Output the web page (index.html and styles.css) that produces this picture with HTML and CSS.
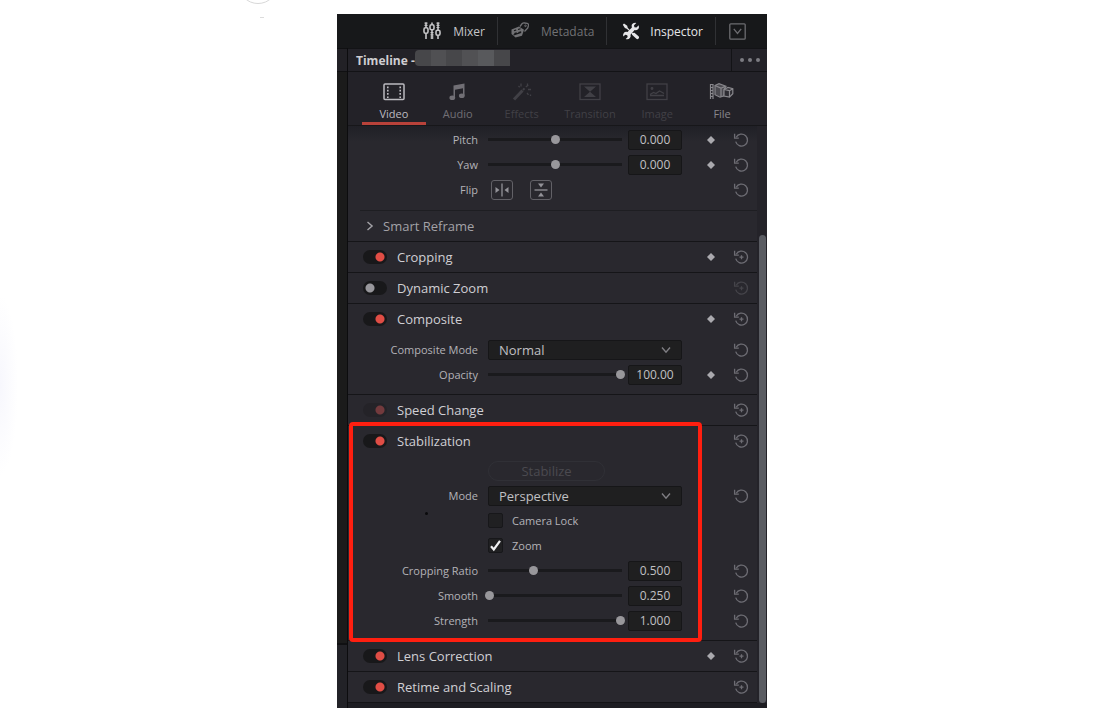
FILE: index.html
```html
<!DOCTYPE html>
<html lang="en">
<head>
<meta charset="utf-8">
<meta name="viewport" content="width=device-width, initial-scale=1">
<title>Inspector</title>
<link rel="stylesheet" href="styles.css">
</head>
<body>
<svg class="sprite" aria-hidden="true">
  <symbol id="reset" viewBox="0 0 16 16">
    <path d="M3.200 5.300A6 6 0 1 1 2.700 9.700" fill="none" stroke="currentColor" stroke-width="1.300"/>
    <path d="M1.600 1.800v4.400h4.200" fill="none" stroke="currentColor" stroke-width="1.300"/>
  </symbol>
  <symbol id="reset-all" viewBox="0 0 16 16">
    <path d="M3.200 5.300A6 6 0 1 1 2.700 9.700" fill="none" stroke="currentColor" stroke-width="1.300"/>
    <path d="M1.600 1.800v4.400h4.200M8.500 6.200v4M6.500 8.200h4" fill="none" stroke="currentColor" stroke-width="1.300"/>
  </symbol>
  <symbol id="key" viewBox="0 0 14 14"><path d="M7 2.900 11 7 7 11.100 3 7z" fill="currentColor"/></symbol>
  <symbol id="chevron" viewBox="0 0 12 12"><path d="m2 3.500 4 4.600 4-4.600" fill="none" stroke="currentColor" stroke-width="1.400"/></symbol>
</svg>
<span class="page-arc" aria-hidden="true"></span>

<main class="panel">
  <nav class="topbar" aria-label="Panels">
    <button class="top-item" type="button">
      <svg width="18" height="18" viewBox="0 0 18 18" fill="none" stroke="currentColor" stroke-width="1.600"><path d="M3 .5v5M3 11.500v5.500M9 .5v2M9 8v9M15 .5v7.500M15 13.500v3.500"/><path d="M3 .5v4M9 10v7M15 .5v6" stroke-width="3" stroke-dasharray="1.200 1"/><rect x="1" y="5.700" width="4" height="5.600" rx="1.500"/><rect x="7" y="2.800" width="4" height="5" rx="1.500"/><rect x="13" y="8.300" width="4" height="5" rx="1.500"/></svg>
      <span>Mixer</span>
    </button>
    <button class="top-item top-item-dim" type="button">
      <svg width="18" height="18" viewBox="0 0 18 18" fill="none" stroke="currentColor"><path d="m9 4.500 2-2.700q1-1 2.500-.8l2.700.4q1.500.4 1.300 2l-.7 2.600-3.300 3.500" stroke-width="1.300"/><path d="M.5 7.500 8 4.500l5 3.200-2 6-6.500 1.800L.5 12z" fill="currentColor" stroke="none"/><path d="m3 8.800 2.200-.8M3.300 11.500l2.400-.8M7 7.500l2.500-.8M7.400 10.700l2.800-.8M2.500 13l7.500-2.600" stroke="#17181a" stroke-width="1.200"/><circle cx="14.500" cy="3.800" r=".8"/></svg>
      <span>Metadata</span>
    </button>
    <button class="top-item top-item-on" type="button">
      <svg width="18" height="18" viewBox="0 0 18 18"><path d="m2 1.500 3.200 2.200.5 2L10.500 11l2-.3 4.300 3.800q.8 1.400-.4 2.300-1.100.8-2.300-.2L10 12.700l-.2-1.700L4.700 6.700l-1.800-.6L.8 2.800z" fill="currentColor"/><path d="M16.800 3.200 14.400 5.600l-2-.3-.4-2L14.300.9q-3.200-.6-4.400 1.700-.6 1.200 0 2.800L5.500 10q-2.300-.6-3.700.9-1.200 1.500-.5 3.700l2-1.900 1.900.5.500 1.800-2 2q2.800.7 4.200-1 1.200-1.600.6-3.300l4.100-4.600q2 .5 3.400-.8 1.400-1.500.8-4.100z" fill="currentColor"/></svg>
      <span>Inspector</span>
    </button>
    <button class="top-item top-item-menu" type="button" aria-label="Panel options">
      <svg width="17" height="17" viewBox="0 0 17 17" fill="none" stroke="currentColor" stroke-width="1.300"><rect x=".8" y=".8" width="15.400" height="15.400" rx="1"/><path d="m4.800 5.800 3.700 4.700 3.700-4.700"/></svg>
    </button>
  </nav>

  <div class="workspace">
    <div class="gutter" aria-hidden="true"><span class="gutter-title"></span><span class="gutter-mid"></span><span class="gutter-end"></span></div>
    <div class="inspector">
      <header class="titlebar">
        <h1 class="title">Timeline -</h1>
        <span class="redacted" aria-hidden="true"><i></i><i></i><i></i><i></i><i></i><i></i></span>
        <button class="more" type="button" aria-label="More"><i></i><i></i><i></i></button>
      </header>

      <nav class="tabs" aria-label="Inspector tabs">
        <button class="tab tab-on" type="button">
          <svg width="24" height="20" viewBox="0 0 24 20"><rect x="2" y="2" width="20" height="15.500" rx="1" fill="none" stroke="currentColor" stroke-width="1.500"/><path d="M5.800 4.500v12M18.200 4.500v12" stroke="currentColor" stroke-width="1.600" stroke-dasharray="1.700 1.600"/></svg>
          <span>Video</span></button>
        <button class="tab" type="button">
          <svg width="24" height="20" viewBox="0 0 24 20" fill="currentColor"><path d="M7.500 3.500 18.500 1.500v12H17V6.200L9 7.700v8H7.500z"/><ellipse cx="6.300" cy="15.800" rx="2.900" ry="2.300"/><ellipse cx="15.800" cy="13.800" rx="2.900" ry="2.300"/></svg>
          <span>Audio</span></button>
        <button class="tab tab-off" type="button">
          <svg width="24" height="20" viewBox="0 0 24 20" fill="none" stroke="currentColor"><path d="m4 17.500 8.500-9" stroke-width="3"/><path d="m13 8 1.500-1.700" stroke-width="2"/><path d="M11 1.500v3M17.500 1.500v2M15.800 5l2.500-2M18 7.500h3M17 11l1.500 1.800M8.500 4l1.200 1.200M20.500 12.500v1.500" stroke-width="1.300"/></svg>
          <span>Effects</span></button>
        <button class="tab tab-off" type="button">
          <svg width="24" height="20" viewBox="0 0 24 20"><rect x="2" y="2" width="20" height="15.500" fill="none" stroke="currentColor" stroke-width="1.300"/><path d="M6 4.500h12L12 9.800zM6 15h12l-6-5.200z" fill="currentColor"/></svg>
          <span>Transition</span></button>
        <button class="tab tab-off" type="button">
          <svg width="24" height="20" viewBox="0 0 24 20" fill="none" stroke="currentColor" stroke-width="1.300"><rect x="2" y="2" width="20" height="15.500"/><path d="m5 12.500 3.500-2 2.500 1 3.500-2.500 2 1 2.500 1.500M5 13.500h14"/><circle cx="7" cy="6.500" r=".8"/></svg>
          <span>Image</span></button>
        <button class="tab tab-file" type="button">
          <svg width="26" height="20" viewBox="0 0 26 20" fill="none" stroke="currentColor" stroke-width="1.200"><path d="M1.500 2v15M4 2v15M1.500 2.500H4M1.500 5.500H4M1.500 8.500H4M1.500 11.500H4M1.500 14.500H4"/><path d="m6 3.500 4-1.800 7 2.500-1.500 2.500-.5 7-4 1.500-5-2.500z" fill="#4b4a50"/><path d="m6 3.500 6 2.700V15M12 6.200l4-1.800"/><path d="m15 7.500 4-2 4.800 1.200v5l-3.300 3.500-5.500-1.200zM20.500 8.700v6M20.500 8.700l3.300-2M15 7.500l5.500 1.200" fill="#2d2c32"/></svg>
          <span>File</span></button>
      </nav>

      <div class="scroller">
        <div class="content">
          <section class="group group-first">
            <div class="row"><label class="label" for="pitch">Pitch</label>
              <div class="control"><input class="slider" id="pitch" type="range" min="0" max="1000" value="500"><input class="value" type="text" value="0.000" aria-label="Pitch value"></div>
              <div class="actions"><button class="act key" type="button" aria-label="Keyframe"><svg width="14" height="14"><use href="#key"/></svg></button><button class="act" type="button" aria-label="Reset"><svg width="16" height="16"><use href="#reset"/></svg></button></div></div>
            <div class="row"><label class="label" for="yaw">Yaw</label>
              <div class="control"><input class="slider" id="yaw" type="range" min="0" max="1000" value="500"><input class="value" type="text" value="0.000" aria-label="Yaw value"></div>
              <div class="actions"><button class="act key" type="button" aria-label="Keyframe"><svg width="14" height="14"><use href="#key"/></svg></button><button class="act" type="button" aria-label="Reset"><svg width="16" height="16"><use href="#reset"/></svg></button></div></div>
            <div class="row"><span class="label">Flip</span>
              <div class="control control-flip">
                <button class="flip" type="button" aria-label="Flip horizontally"><svg width="20" height="18" viewBox="0 0 20 18"><path d="M10 2.500v13" stroke="currentColor" stroke-width="1.300"/><path d="M3.500 6v6l4-3zM16.500 6v6l-4-3z" fill="currentColor"/></svg></button>
                <button class="flip" type="button" aria-label="Flip vertically"><svg width="20" height="18" viewBox="0 0 20 18"><path d="M3.500 9h13" stroke="currentColor" stroke-width="1.300"/><path d="M7 2.500h6l-3 4zM7 15.500h6l-3-4z" fill="currentColor"/></svg></button>
              </div>
              <div class="actions"><button class="act" type="button" aria-label="Reset"><svg width="16" height="16"><use href="#reset"/></svg></button></div></div>
          </section>
          <button class="reframe" type="button"><svg class="reframe-arrow" width="12" height="12"><use href="#chevron"/></svg><span>Smart Reframe</span></button>

          <section class="group">
            <div class="head"><input class="toggle" id="cropping" type="checkbox" checked><label class="head-title" for="cropping">Cropping</label>
              <div class="actions"><button class="act key" type="button" aria-label="Keyframe"><svg width="14" height="14"><use href="#key"/></svg></button><button class="act" type="button" aria-label="Reset"><svg width="16" height="16"><use href="#reset-all"/></svg></button></div></div>
          </section>
          <section class="group">
            <div class="head"><input class="toggle" id="dynamic" type="checkbox"><label class="head-title" for="dynamic">Dynamic Zoom</label>
              <div class="actions"><button class="act act-dim" type="button" aria-label="Reset"><svg width="16" height="16"><use href="#reset-all"/></svg></button></div></div>
          </section>
          <section class="group">
            <div class="head"><input class="toggle" id="composite" type="checkbox" checked><label class="head-title" for="composite">Composite</label>
              <div class="actions"><button class="act key" type="button" aria-label="Keyframe"><svg width="14" height="14"><use href="#key"/></svg></button><button class="act" type="button" aria-label="Reset"><svg width="16" height="16"><use href="#reset-all"/></svg></button></div></div>
            <div class="rows">
              <div class="row"><label class="label" for="cmode">Composite Mode</label>
                <div class="control"><select class="select" id="cmode"><option>Normal</option></select><svg class="select-arrow" width="12" height="12"><use href="#chevron"/></svg></div>
                <div class="actions"><button class="act" type="button" aria-label="Reset"><svg width="16" height="16"><use href="#reset"/></svg></button></div></div>
              <div class="row"><label class="label" for="opacity">Opacity</label>
                <div class="control"><input class="slider" id="opacity" type="range" min="0" max="1000" value="1000"><input class="value" type="text" value="100.00" aria-label="Opacity value"></div>
                <div class="actions"><button class="act key" type="button" aria-label="Keyframe"><svg width="14" height="14"><use href="#key"/></svg></button><button class="act" type="button" aria-label="Reset"><svg width="16" height="16"><use href="#reset"/></svg></button></div></div>
            </div>
          </section>
          <section class="group">
            <div class="head"><input class="toggle toggle-dim" id="speed" type="checkbox" checked><label class="head-title" for="speed">Speed Change</label>
              <div class="actions"><button class="act" type="button" aria-label="Reset"><svg width="16" height="16"><use href="#reset-all"/></svg></button></div></div>
          </section>
          <section class="group group-marked">
            <div class="head"><input class="toggle" id="stab" type="checkbox" checked><label class="head-title" for="stab">Stabilization</label>
              <div class="actions"><button class="act" type="button" aria-label="Reset"><svg width="16" height="16"><use href="#reset-all"/></svg></button></div></div>
            <div class="rows">
              <div class="row"><span class="label"></span><div class="control"><button class="stabilize" type="button" disabled>Stabilize</button></div></div>
              <div class="row"><label class="label" for="smode">Mode</label>
                <div class="control"><select class="select" id="smode"><option>Perspective</option></select><svg class="select-arrow" width="12" height="12"><use href="#chevron"/></svg></div>
                <div class="actions"><button class="act" type="button" aria-label="Reset"><svg width="16" height="16"><use href="#reset"/></svg></button></div></div>
              <div class="row"><span class="label"></span><div class="control"><label class="check-label"><input class="check" type="checkbox">Camera Lock</label></div></div>
              <div class="row"><span class="label"></span><div class="control"><label class="check-label"><span class="check-wrap"><input class="check" type="checkbox" checked><svg class="tick" width="15" height="15" viewBox="0 0 15 15"><path d="m3 8.200 2.800 3.300L12 2.800" fill="none" stroke="currentColor" stroke-width="2.200"/></svg></span>Zoom</label></div></div>
              <div class="row"><label class="label" for="ratio">Cropping Ratio</label>
                <div class="control"><input class="slider" id="ratio" type="range" min="0" max="1000" value="336"><input class="value" type="text" value="0.500" aria-label="Cropping ratio value"></div>
                <div class="actions"><button class="act" type="button" aria-label="Reset"><svg width="16" height="16"><use href="#reset"/></svg></button></div></div>
              <div class="row"><label class="label" for="smooth">Smooth</label>
                <div class="control"><input class="slider" id="smooth" type="range" min="0" max="1000" value="0"><input class="value" type="text" value="0.250" aria-label="Smooth value"></div>
                <div class="actions"><button class="act" type="button" aria-label="Reset"><svg width="16" height="16"><use href="#reset"/></svg></button></div></div>
              <div class="row"><label class="label" for="strength">Strength</label>
                <div class="control"><input class="slider" id="strength" type="range" min="0" max="1000" value="1000"><input class="value" type="text" value="1.000" aria-label="Strength value"></div>
                <div class="actions"><button class="act" type="button" aria-label="Reset"><svg width="16" height="16"><use href="#reset"/></svg></button></div></div>
            </div>
            <span class="marker" aria-hidden="true"></span>
            <span class="speck" aria-hidden="true"></span>
          </section>
          <section class="group">
            <div class="head"><input class="toggle" id="lens" type="checkbox" checked><label class="head-title" for="lens">Lens Correction</label>
              <div class="actions"><button class="act key" type="button" aria-label="Keyframe"><svg width="14" height="14"><use href="#key"/></svg></button><button class="act" type="button" aria-label="Reset"><svg width="16" height="16"><use href="#reset-all"/></svg></button></div></div>
          </section>
          <section class="group">
            <div class="head"><input class="toggle" id="retime" type="checkbox" checked><label class="head-title" for="retime">Retime and Scaling</label>
              <div class="actions"><button class="act" type="button" aria-label="Reset"><svg width="16" height="16"><use href="#reset-all"/></svg></button></div></div>
          </section>
        </div>
        <div class="track" aria-hidden="true"><span class="thumb"></span></div>
      </div>
      <footer class="foot"></footer>
    </div>
  </div>
</main>
</body>
</html>
```

FILE: styles.css
```css
* { box-sizing: border-box; }

body {
  margin: 0;
  padding: 14px 0;
  background: radial-gradient(ellipse 18px 90px at 0 385px, #f7f7fd, #fff) #fff;
  font-family: "Open Sans", "Noto Sans", sans-serif;
  font-size: 11px;
  color: #b4b3b8;
}

button, input, select { font: inherit; color: inherit; margin: 0; }
button { background: none; border: 0; padding: 0; }
svg { display: block; flex: none; }
.sprite { position: absolute; width: 0; height: 0; }

.page-arc {
  position: absolute;
  top: -36px;
  left: 238px;
  width: 40px;
  height: 40px;
  border: 1px solid #d8d8d8;
  border-radius: 50%;
}
.page-arc::after {
  content: "";
  position: absolute;
  top: 52px;
  left: 21px;
  width: 4px;
  height: 1px;
  background: #dcdcdc;
}

.panel {
  width: 100%;
  max-width: 430px;
  margin: 0 auto;
  background: #29282e;
}

/* Top bar */
.topbar {
  display: flex;
  justify-content: flex-end;
  align-items: center;
  height: 34px;
  background: #17181a;
}
.top-item {
  display: flex;
  align-items: center;
  gap: 12px;
  height: 28px;
  padding: 0 12px 0 13px;
  font-size: 12px;
  color: #c6c6c8;
  border-right: 1px solid #303134;
}
.top-item-dim { color: #717174; }
.top-item-on { gap: 10px; padding-left: 15px; color: #e6e6e8; }
.top-item-menu { border-right: 0; padding-right: 21px; color: #6c6c70; }

/* Frame */
.workspace { display: flex; }
.gutter { display: flex; flex-direction: column; width: 11px; border-right: 1px solid #0c0c0e; background: #1b1b1b; }
.gutter-title { height: 24px; background: #222126; border-top: 1px solid #101012; border-bottom: 1px solid #101012; }
.gutter-mid { flex: 1; }
.gutter-end { height: 65px; background: #222227; border-top: 2px solid #101012; }
.inspector { flex: 1; min-width: 0; }

.titlebar {
  display: flex;
  align-items: center;
  height: 24px;
  padding-left: 8px;
  background: #232228;
  border-top: 1px solid #131316;
  border-bottom: 1px solid #131316;
}
.title { margin: 0; font-size: 12px; font-weight: 700; color: #cfced2; white-space: nowrap; }
.redacted { display: flex; width: 95px; height: 16px; margin-bottom: 5px; border-radius: 4px 0 0 4px; overflow: hidden; }
.redacted i { flex: 1; background: #47474a; }
.redacted i:nth-child(2) { background: #505053; }
.redacted i:nth-child(4) { background: #515154; }
.redacted i:nth-child(5) { background: #58595c; }
.more { display: flex; align-items: center; justify-content: center; gap: 4px; width: 36px; height: 22px; margin-left: auto; border-left: 1px solid #131316; }
.more i { width: 4px; height: 4px; border-radius: 50%; background: #7d7c82; }

.tabs {
  display: grid;
  grid-template-columns: 64fr 64fr 64fr 73fr 62fr 68fr;
  height: 53px;
  padding: 0 11px 0 14px;
  background: #232228;
}
.tab { display: flex; flex-direction: column; align-items: center; gap: 4px; padding-top: 10px; line-height: 16px; color: #716f75; border-bottom: 3px solid transparent; }
.tab-on { color: #bcbbc0; border-bottom-color: #b8423a; }
.tab-off { color: #414046; }
.tab-file { color: #88878c; }

.scroller { display: flex; border-top: 1px solid #17171a; }
.content { flex: 1; min-width: 0; border-bottom: 1px solid #141417; }
.track { display: flex; width: 10px; padding: 109px 1px 0 2px; background: #242329; }
.thumb { flex: 1; border-radius: 4px; background: #5a5c62; }
.foot { height: 5px; background: #1d1d22; }

/* Groups and rows */
.group { border-top: 1px solid #151518; }
.group-first { border-top: 0; padding: 1px 0 8px; background: linear-gradient(#202026, #29282e 16px); }
.reframe {
  display: flex;
  align-items: center;
  gap: 7px;
  width: calc(100% - 12px);
  height: 31px;
  margin-left: 12px;
  padding-left: 4px;
  border-top: 1px solid #1e1e22;
  font-size: 13px;
  color: #a3a2a7;
}
.reframe-arrow { transform: rotate(-90deg); }
.head { display: flex; align-items: center; height: 30px; padding-left: 15px; }
.head-title { margin-left: 10px; font-size: 13px; color: #d0cfd4; white-space: nowrap; }
.rows { padding: 3px 0 7px; }
.group-marked { position: relative; }
.group-marked .rows { padding-top: 2px; }
.row { display: grid; grid-template-columns: 130px minmax(0, 1fr) 75px; align-items: center; height: 25px; }
.label { text-align: right; white-space: nowrap; }
.control { position: relative; display: flex; align-items: center; padding-left: 10px; }
.control-flip { gap: 17px; padding-left: 13px; }
.actions { display: flex; justify-content: flex-end; align-items: center; gap: 15px; width: 75px; margin-left: auto; padding-right: 8px; }
.act { color: #6d6c73; }
.act-dim { color: #45444a; }
.key { color: #aaa9ae; }
.flip { border: 1px solid #626167; border-radius: 3px; color: #939298; }

/* Controls */
.toggle {
  appearance: none;
  width: 24px;
  height: 14px;
  border-radius: 7px;
  background: radial-gradient(circle at 7px 50%, #98979c 4px, transparent 5px) #18181a;
}
.toggle:checked { background: radial-gradient(circle at 17px 50%, #e04d45 4px, transparent 5px) #18181a; }
.toggle-dim:checked { background: radial-gradient(circle at 17px 50%, #733a3d 4px, transparent 5px) #242328; }

.slider {
  appearance: none;
  flex: 1;
  min-width: 0;
  height: 10px;
  margin: 0 3px 0 -3px;
  background: linear-gradient(#1a1a1d, #1a1a1d) center / calc(100% - 6px) 3px no-repeat;
}
.slider::-webkit-slider-thumb { appearance: none; width: 9px; height: 9px; border-radius: 50%; background: #98979b; }
.slider::-moz-range-thumb { width: 9px; height: 9px; border: 0; border-radius: 50%; background: #98979b; }

.value, .select {
  height: 20px;
  padding: 0;
  border: 1px solid #161618;
  border-radius: 2px;
  background: #1f1f20;
  font-size: 12px;
  color: #c0c0c3;
}
.value { width: 54px; text-align: center; }
.select { appearance: none; width: 100%; padding: 0 28px 0 10px; font-size: 13px; }
.select-arrow { position: absolute; right: 10px; color: #7f7e83; pointer-events: none; }

.stabilize { width: 117px; height: 20px; border: 1px solid #303036; border-radius: 10px; font-size: 13px; line-height: 18px; color: #4b4a50; }
.check-label { display: flex; align-items: center; gap: 9px; }
.check-wrap { position: relative; }
.check { appearance: none; display: block; width: 15px; height: 15px; border: 1px solid #17171a; border-radius: 2px; background: #202022; }
.tick { position: absolute; inset: 0; color: #f0f0f2; pointer-events: none; }

/* Annotation over the Stabilization group */
.marker { position: absolute; inset: -4px 55px -2px 1px; border: 4px solid #ff1f10; border-radius: 4px; pointer-events: none; }
.speck { position: absolute; top: 86px; left: 77px; width: 3px; height: 3px; border-radius: 50%; background: #0a0a0c; }
```
